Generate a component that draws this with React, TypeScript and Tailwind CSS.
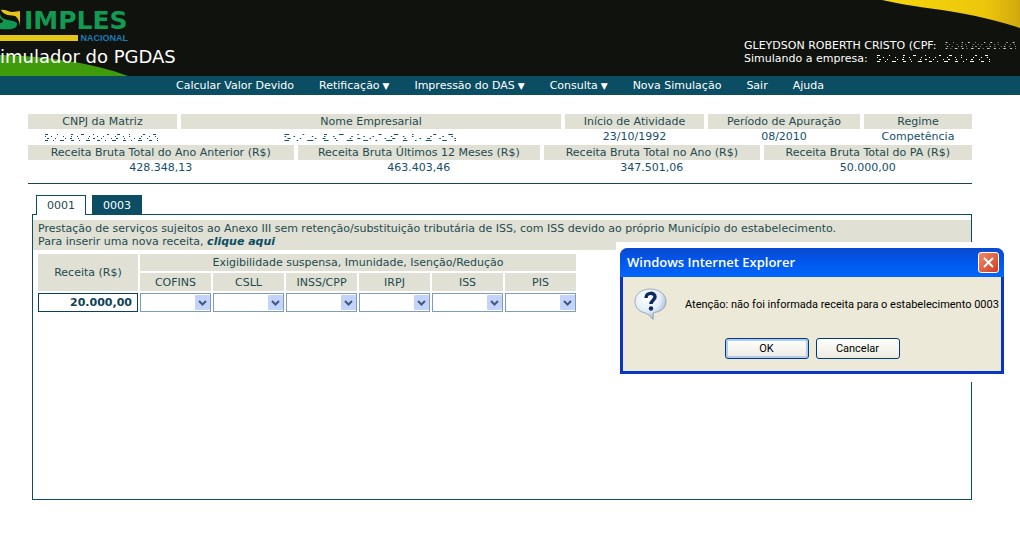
import type { ReactNode } from "react";

const menu = [
  { label: "Calcular Valor Devido" },
  { label: "Retificação", sub: true },
  { label: "Impressão do DAS", sub: true },
  { label: "Consulta", sub: true },
  { label: "Nova Simulação" },
  { label: "Sair" },
  { label: "Ajuda" },
];

const taxes = ["COFINS", "CSLL", "INSS/CPP", "IRPJ", "ISS", "PIS"];

function Logo() {
  return (
    <div className="relative h-[45px] w-32 shrink-0 pl-6 pt-2">
      <svg className="absolute left-0 top-0" width="82" height="42" aria-hidden="true">
        <path d="M1 10c4-1 7 2 11 2 3 0 6-1 8-1v16c0-5-2-9-5-11-4-1-11 0-14-6z" fill="#e3c619" />
        <path d="M0 14c1 4 4 5 8 6 6 1 10 2 9 5-1 4-6 5-17 4v-6c3 0 4-2 2-3l-2-2z" fill="#0f9650" />
        <rect y="35" width="78" height="6" fill="#e3c619" />
      </svg>
      <div className="text-[25px] font-bold leading-[26px] text-[#129a52]">IMPLES</div>
      <div className="text-right font-['Liberation_Sans',sans-serif] text-[9px] font-bold leading-2 text-[#1b7cb8]">
        NACIONAL
      </div>
    </div>
  );
}

function Banner() {
  return (
    <header className="relative flex h-[76px] justify-between overflow-hidden bg-[#10120e] text-white">
      <svg className="absolute bottom-0 left-0" width="130" height="24" aria-hidden="true">
        <path d="M0 3C45 4 90 10 128 24H0z" fill="#3f9a0c" />
      </svg>
      <svg className="absolute right-0 top-0" width="138" height="28" aria-hidden="true">
        <defs>
          <linearGradient id="sun">
            <stop offset="0" stopColor="#f6d70c" />
            <stop offset="0.75" stopColor="#ecc60b" />
            <stop offset="1" stopColor="#d0a80e" />
          </linearGradient>
        </defs>
        <path d="M0 0C30 7 50 8 78 13 100 17 120 22 138 28V0z" fill="url(#sun)" />
      </svg>
      <div className="relative">
        <Logo />
        <h1 className="text-lg leading-6">imulador do PGDAS</h1>
      </div>
      <div className="relative w-[276px] overflow-hidden whitespace-nowrap pt-[39px] leading-[13px]">
        <p className="flex">
          GLEYDSON ROBERTH CRISTO (CPF:
          <Smudge className="ml-2 h-3 w-[72px] shrink-0 text-white" />
        </p>
        <p className="flex">
          Simulando a empresa:
          <Smudge className="ml-2 h-3 w-[116px] text-white" />
        </p>
      </div>
    </header>
  );
}

// Erased value: only stray specks of the writing are left
function Smudge({ className }: { className: string }) {
  return (
    <svg className={className} viewBox="0 0 116 12" preserveAspectRatio="none" aria-label="dado ocultado" role="img">
      <g stroke="currentColor" fill="none">
        <path d="M1 3.500H116" strokeDasharray="3 9 1 13 2 8" />
        <path d="M1 5.500H116" strokeDasharray="1 5 1 11 1 7" />
        <path d="M3 7.500H116" strokeDasharray="2 6 1 9 1 4" />
        <path d="M1 9.500H116" strokeDasharray="3 5 1 6 4 7" />
      </g>
    </svg>
  );
}

function Summary({ cols }: { cols: { title: string; width: string; value: ReactNode }[] }) {
  return (
    <div className="-mx-1">
      <table className="w-full table-fixed border-separate border-spacing-x-1 border-spacing-y-0 text-center">
        <thead>
          <tr>
            {cols.map((c) => (
              <th key={c.title} className={`${c.width} h-[15px] bg-[#e0e0d4] p-0 font-normal leading-[15px]`}>
                {c.title}
              </th>
            ))}
          </tr>
        </thead>
        <tbody>
          <tr>
            {cols.map((c) => (
              <td key={c.title} className="h-4 p-0 leading-4 text-[#14506e]">{c.value}</td>
            ))}
          </tr>
        </tbody>
      </table>
    </div>
  );
}

function TaxSelect({ name }: { name: string }) {
  return (
    <div className="relative">
      <select
        aria-label={name}
        className="block h-[19px] w-full appearance-none border border-[#7f9db9] bg-white outline-none"
      >
        <option></option>
      </select>
      <svg className="pointer-events-none absolute right-px top-0.5" width="15" height="15" aria-hidden="true">
        <rect width="15" height="15" rx="1" fill="#c3d3fb" />
        <path d="M4 6l3.500 3.500L11 6" fill="none" stroke="#42597f" strokeWidth="2" />
      </svg>
    </div>
  );
}

function Revenue() {
  return (
    <table className="mx-[3px] mt-0.5 border-separate border-spacing-0.5 text-center">
      <thead>
        <tr>
          <th rowSpan={2} className="w-[100px] bg-[#e0e0d4] p-0 font-normal">
            <label htmlFor="receita">Receita (R$)</label>
          </th>
          <th colSpan={6} className="h-[17px] bg-[#e0e0d4] p-0 font-normal">
            Exigibilidade suspensa, Imunidade, Isenção/Redução
          </th>
        </tr>
        <tr>
          {taxes.map((t) => (
            <th key={t} className="h-[18px] w-[71px] bg-[#e0e0d4] p-0 font-normal">{t}</th>
          ))}
        </tr>
      </thead>
      <tbody>
        <tr>
          <td className="p-0">
            <input
              id="receita"
              defaultValue="20.000,00"
              className="block h-[19px] w-[100px] border border-[#0b3f5c] px-[5px] text-right font-bold text-[#0d4258] outline-none"
            />
          </td>
          {taxes.map((t) => (
            <td key={t} className="p-0">
              <TaxSelect name={t} />
            </td>
          ))}
        </tr>
      </tbody>
    </table>
  );
}

function Alert() {
  return (
    <div className="absolute left-[616px] top-[242px] w-[392px] bg-white px-1 pb-2 pt-1.5 text-black">
      <div
        role="alertdialog"
        aria-labelledby="alert-title"
        className="rounded-t-lg border-x-[3px] border-b-[3px] border-[#0a35c4] bg-[#ece9d8] font-[Roboto,sans-serif]"
      >
        <div className="-mx-[3px] flex h-[29px] items-center justify-between rounded-t-lg bg-linear-to-b from-[#0a4ad0] via-[#0058ee] to-[#0366fb] pl-[7px] pr-[5px]">
          <h2 id="alert-title" className="font-['Open_Sans',sans-serif] text-[13px] font-semibold text-white">
            Windows Internet Explorer
          </h2>
          <button
            aria-label="Fechar"
            className="flex size-[21px] items-center justify-center rounded-[3px] border border-white bg-linear-to-br from-[#ee8a6c] to-[#cf3a14]"
          >
            <svg width="11" height="11" aria-hidden="true">
              <path d="M1 1l9 9M10 1l-9 9" stroke="#fff" strokeWidth="2" />
            </svg>
          </button>
        </div>
        <div className="flex items-center gap-[18px] whitespace-nowrap pl-[11px] pt-[11px]">
          <svg width="33" height="33" viewBox="0 0 33 33" className="shrink-0" aria-hidden="true">
            <defs>
              <radialGradient id="bubble" cx="0.4" cy="0.3" r="0.7">
                <stop offset="0" stopColor="#fff" />
                <stop offset="0.6" stopColor="#e3edf8" />
                <stop offset="1" stopColor="#9db4d0" />
              </radialGradient>
            </defs>
            <path
              d="M16 1C7.500 1 1 6 1 13.500c0 6 4 10 10 11.500 3 1 5 3 8 6.500l.5-7C27 24 32 20 32 13.500 32 6 25 1 16 1z"
              fill="url(#bubble)"
              stroke="#8c9db3"
              strokeWidth="0.8"
            />
            <path d="M12 10c0-6 9-6 9-1 0 3-4 3.500-4 7" fill="none" stroke="#0b2a63" strokeWidth="3.500" />
            <circle cx="17" cy="20.500" r="2.200" fill="#0b2a63" />
          </svg>
          <p>Atenção: não foi informada receita para o estabelecimento 0003</p>
        </div>
        <div className="flex justify-center gap-[7px] pb-3 pt-[17px]">
          <button className="h-[21px] w-21 rounded-[3px] border border-[#003c74] bg-linear-to-b from-white to-[#eceae0] shadow-[inset_0_0_0_2px_#b4cbf2]">
            OK
          </button>
          <button className="h-[21px] w-21 rounded-[3px] border border-[#003c74] bg-linear-to-b from-white to-[#eceae0]">
            Cancelar
          </button>
        </div>
      </div>
    </div>
  );
}

export default function App() {
  return (
    <div className="relative min-h-screen overflow-x-hidden bg-white font-['DejaVu_Sans',sans-serif] text-[11px] leading-[13px] text-[#1f4a50]">
      <Banner />
      <nav className="flex h-[19px] items-center justify-center gap-[25px] whitespace-nowrap bg-[#0b4d63] pr-5 text-white">
        {menu.map((m) => (
          <a key={m.label} href="#">
            {m.label}
            {m.sub && <span className="text-[9px]"> ▼</span>}
          </a>
        ))}
      </nav>
      <main className="pl-7 pr-12 pt-[19px]">
        <Summary
          cols={[
            { title: "CNPJ da Matriz", width: "w-[149px]", value: <Smudge className="ml-4 h-3 w-[116px]" /> },
            { title: "Nome Empresarial", width: "w-auto", value: <Smudge className="mx-auto h-3 w-44" /> },
            { title: "Início de Atividade", width: "w-[139px]", value: "23/10/1992" },
            { title: "Período de Apuração", width: "w-[152px]", value: "08/2010" },
            { title: "Regime", width: "w-[108px]", value: "Competência" },
          ]}
        />
        <Summary
          cols={[
            { title: "Receita Bruta Total do Ano Anterior (R$)", width: "w-[265px]", value: "428.348,13" },
            { title: "Receita Bruta Últimos 12 Meses (R$)", width: "w-[242px]", value: "463.403,46" },
            { title: "Receita Bruta Total no Ano (R$)", width: "w-[215px]", value: "347.501,06" },
            { title: "Receita Bruta Total do PA (R$)", width: "w-[208px]", value: "50.000,00" },
          ]}
        />
        <hr className="mt-[7px] border-[#1d4257]" />
        <div className="pl-1 pt-[11px]">
          <div role="tablist" className="relative -mb-px flex items-start gap-1.5 pl-1">
            <button role="tab" aria-selected="true" className="h-5 w-[50px] border border-b-0 border-[#0b4d63] bg-white">
              0001
            </button>
            <button role="tab" aria-selected="false" className="h-5 w-[50px] bg-[#0b4d63] text-white">
              0003
            </button>
          </div>
          <section className="min-h-[286px] border border-[#0b4d63] pt-[5px]">
            <div className="bg-[#e0e0d4] px-[5px] py-0.5">
              <p>
                Prestação de serviços sujeitos ao Anexo III sem retenção/substituição tributária de ISS, com ISS devido
                ao próprio Município do estabelecimento.
              </p>
              <p>
                Para inserir uma nova receita,{" "}
                <a href="#" className="font-bold italic text-[#0b4d63]">clique aqui</a>
              </p>
            </div>
            <Revenue />
          </section>
        </div>
      </main>
      <Alert />
    </div>
  );
}
